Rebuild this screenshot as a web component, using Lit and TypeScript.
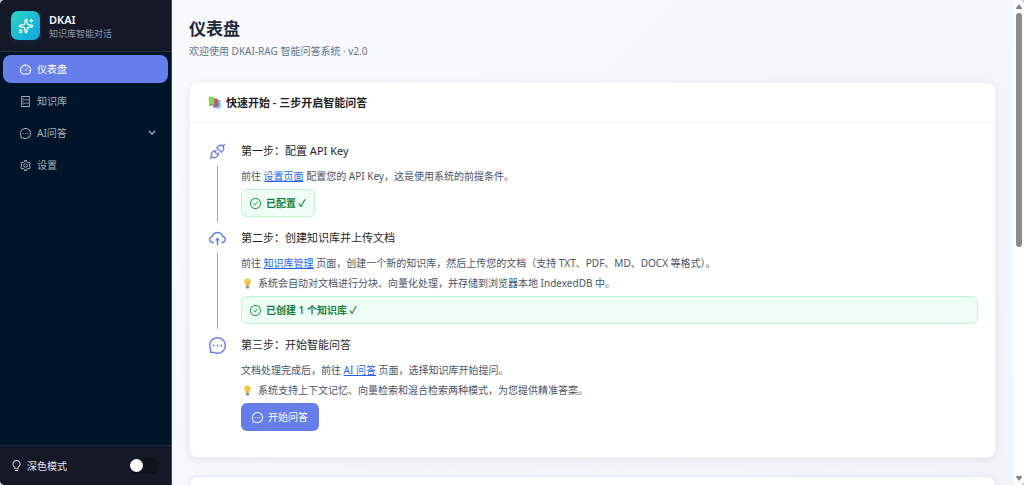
import { LitElement, html, css, svg, nothing } from "lit";
import { customElement, property, state } from "lit/decorators.js";
import { classMap } from "lit/directives/class-map.js";

const PATHS: Record<string, string> = {
  dashboard:
    "M924.8 385.6a446.7 446.7 0 00-96-142.4 446.7 446.7 0 00-142.4-96C631.1 123.8 572.5 112 512 112s-119.1 11.8-174.4 35.2a446.7 446.7 0 00-142.4 96 446.7 446.7 0 00-96 142.4C75.8 440.9 64 499.5 64 560c0 132.7 58.3 257.7 159.9 343.1l1.7 1.4c5.8 4.8 13.1 7.5 20.6 7.5h531.7c7.5 0 14.8-2.7 20.6-7.5l1.7-1.4C901.7 817.7 960 692.7 960 560c0-60.5-11.9-119.1-35.2-174.4zM761.4 836H262.6A371.12 371.12 0 01140 560c0-99.4 38.7-192.8 109-263 70.3-70.3 163.7-109 263-109 99.4 0 192.8 38.7 263 109 70.3 70.3 109 163.7 109 263 0 105.6-44.5 205.5-122.6 276zM623.5 421.5a8.03 8.03 0 00-11.3 0L527.7 506c-18.7-5-39.4-.2-54.1 14.5a55.95 55.95 0 000 79.2 55.95 55.95 0 0079.2 0 55.87 55.87 0 0014.5-54.1l84.5-84.5c3.1-3.1 3.1-8.2 0-11.3l-28.3-28.3zM490 320h44c4.4 0 8-3.6 8-8v-80c0-4.4-3.6-8-8-8h-44c-4.4 0-8 3.6-8 8v80c0 4.4 3.6 8 8 8zm260 218v44c0 4.4 3.6 8 8 8h80c4.4 0 8-3.6 8-8v-44c0-4.4-3.6-8-8-8h-80c-4.4 0-8 3.6-8 8zm12.7-197.2l-31.1-31.1a8.03 8.03 0 00-11.3 0l-56.6 56.6a8.03 8.03 0 000 11.3l31.1 31.1c3.1 3.1 8.2 3.1 11.3 0l56.6-56.6c3.1-3.1 3.1-8.2 0-11.3zm-458.6-31.1a8.03 8.03 0 00-11.3 0l-31.1 31.1a8.03 8.03 0 000 11.3l56.6 56.6c3.1 3.1 8.2 3.1 11.3 0l31.1-31.1c3.1-3.1 3.1-8.2 0-11.3l-56.6-56.6zM262 530h-80c-4.4 0-8 3.6-8 8v44c0 4.4 3.6 8 8 8h80c4.4 0 8-3.6 8-8v-44c0-4.4-3.6-8-8-8z",
  database:
    "M832 64H192c-17.7 0-32 14.3-32 32v832c0 17.7 14.3 32 32 32h640c17.7 0 32-14.3 32-32V96c0-17.7-14.3-32-32-32zm-600 72h560v208H232V136zm560 480H232V408h560v208zm0 272H232V680h560v208zM304 240a40 40 0 1080 0 40 40 0 10-80 0zm0 272a40 40 0 1080 0 40 40 0 10-80 0zm0 272a40 40 0 1080 0 40 40 0 10-80 0z",
  message:
    "M464 512a48 48 0 1096 0 48 48 0 10-96 0zm200 0a48 48 0 1096 0 48 48 0 10-96 0zm-400 0a48 48 0 1096 0 48 48 0 10-96 0zm661.2-173.6c-22.6-53.7-55-101.9-96.3-143.3a444.35 444.35 0 00-143.3-96.3C630.6 75.7 572.2 64 512 64h-2c-60.6.3-119.3 12.3-174.5 35.9a445.35 445.35 0 00-142 96.5c-40.9 41.3-73 89.3-95.2 142.8-23 55.4-34.6 114.3-34.3 174.9A449.4 449.4 0 00112 714v152a46 46 0 0046 46h152.1A449.4 449.4 0 00510 960h2.1c59.9 0 118-11.6 172.7-34.3a444.48 444.48 0 00142.8-95.2c41.3-40.9 73.8-88.7 96.5-142 23.6-55.2 35.6-113.9 35.9-174.5.3-60.9-11.5-120-34.8-175.6zm-151.1 438C704 845.8 611 884 512 884h-1.7c-60.3-.3-120.2-15.3-173.1-43.5l-8.4-4.5H188V695.2l-4.5-8.4C155.3 633.9 140.3 574 140 513.7c-.4-99.7 37.7-193.3 107.6-263.8 69.8-70.5 163.1-109.5 262.8-109.9h1.7c50 0 98.5 9.7 144.2 28.9 44.6 18.7 84.6 45.6 119 80 34.3 34.3 61.3 74.4 80 119 19.4 46.2 29.1 95.2 28.9 145.8-.6 99.6-39.7 192.9-110.1 262.7z",
  setting:
    "M924.8 625.7l-65.5-56c3.1-19 4.7-38.4 4.7-57.8s-1.6-38.8-4.7-57.8l65.5-56a32.03 32.03 0 009.3-35.2l-.9-2.6a443.74 443.74 0 00-79.7-137.9l-1.8-2.1a32.12 32.12 0 00-35.1-9.5l-81.3 28.9c-30-24.6-63.5-44-99.7-57.6l-15.7-85a32.05 32.05 0 00-25.8-25.7l-2.7-.5c-52.1-9.4-106.9-9.4-159 0l-2.7.5a32.05 32.05 0 00-25.8 25.7l-15.8 85.4a351.86 351.86 0 00-99 57.4l-81.9-29.1a32 32 0 00-35.1 9.5l-1.8 2.1a446.02 446.02 0 00-79.7 137.9l-.9 2.6c-4.5 12.5-.8 26.5 9.3 35.2l66.3 56.6c-3.1 18.8-4.6 38-4.6 57.1 0 19.2 1.5 38.4 4.6 57.1L99 625.5a32.03 32.03 0 00-9.3 35.2l.9 2.6c18.1 50.4 44.9 96.9 79.7 137.9l1.8 2.1a32.12 32.12 0 0035.1 9.5l81.9-29.1c29.8 24.5 63.1 43.9 99 57.4l15.8 85.4a32.05 32.05 0 0025.8 25.7l2.7.5a449.4 449.4 0 00159 0l2.7-.5a32.05 32.05 0 0025.8-25.7l15.7-85a350 350 0 0099.7-57.6l81.3 28.9a32 32 0 0035.1-9.5l1.8-2.1c34.8-41.1 61.6-87.5 79.7-137.9l.9-2.6c4.5-12.3.8-26.3-9.3-35zM788.3 465.9c2.5 15.1 3.8 30.6 3.8 46.1s-1.3 31-3.8 46.1l-6.6 40.1 74.7 63.9a370.03 370.03 0 01-42.6 73.6L721 702.8l-31.4 25.8c-23.9 19.6-50.5 35-79.3 45.8l-38.1 14.3-17.9 97a377.5 377.5 0 01-85 0l-17.9-97.2-37.8-14.5c-28.5-10.8-55-26.2-78.7-45.7l-31.4-25.9-93.4 33.2c-17-22.9-31.2-47.6-42.6-73.6l75.5-64.5-6.5-40c-2.4-14.9-3.7-30.3-3.7-45.5 0-15.3 1.2-30.6 3.7-45.5l6.5-40-75.5-64.5c11.3-26.1 25.6-50.7 42.6-73.6l93.4 33.2 31.4-25.9c23.7-19.5 50.2-34.9 78.7-45.7l37.9-14.3 17.9-97.2c28.1-3.2 56.8-3.2 85 0l17.9 97 38.1 14.3c28.7 10.8 55.4 26.2 79.3 45.8l31.4 25.8 92.8-32.9c17 22.9 31.2 47.6 42.6 73.6L781.8 426l6.5 39.9zM512 326c-97.2 0-176 78.8-176 176s78.8 176 176 176 176-78.8 176-176-78.8-176-176-176zm79.2 255.2A111.6 111.6 0 01512 614c-29.9 0-58-11.7-79.2-32.8A111.6 111.6 0 01400 502c0-29.9 11.7-58 32.8-79.2C454 401.6 482.1 390 512 390c29.9 0 58 11.6 79.2 32.8A111.6 111.6 0 01624 502c0 29.9-11.7 58-32.8 79.2z",
  bulb:
    "M632 888H392c-4.4 0-8 3.6-8 8v32c0 17.7 14.3 32 32 32h192c17.7 0 32-14.3 32-32v-32c0-4.4-3.6-8-8-8zM512 64c-181.1 0-328 146.9-328 328 0 121.4 66 227.4 164 284.1V792c0 17.7 14.3 32 32 32h264c17.7 0 32-14.3 32-32V676.1c98-56.7 164-162.7 164-284.1 0-181.1-146.9-328-328-328zm127.9 549.8L604 634.6V752H420V634.6l-35.9-20.8C305.4 568.3 256 484.5 256 392c0-141.4 114.6-256 256-256s256 114.6 256 256c0 92.5-49.4 176.3-128.1 221.8z",
  api:
    "M917.7 148.8l-42.4-42.4c-1.6-1.6-3.6-2.3-5.7-2.3s-4.1.8-5.7 2.3l-76.1 76.1a199.27 199.27 0 00-112.1-34.3c-51.2 0-102.4 19.5-141.5 58.6L432.3 308.7a8.03 8.03 0 000 11.3L704 591.7c1.6 1.6 3.6 2.3 5.7 2.3 2 0 4.1-.8 5.7-2.3l101.9-101.9c68.9-69 77-175.7 24.3-253.5l76.1-76.1c3.1-3.2 3.1-8.3 0-11.4zM769.1 441.7l-59.4 59.4-186.8-186.8 59.4-59.4c24.9-24.9 58.1-38.7 93.4-38.7 35.3 0 68.4 13.7 93.4 38.7 24.9 24.9 38.7 58.1 38.7 93.4 0 35.3-13.8 68.4-38.7 93.4zm-190.2 105a8.03 8.03 0 00-11.3 0L501 613.3 410.7 523l66.7-66.7c3.1-3.1 3.1-8.2 0-11.3L441 408.6a8.03 8.03 0 00-11.3 0L363 475.3l-43-43a7.85 7.85 0 00-5.7-2.3c-2 0-4.1.8-5.7 2.3L206.8 534.2c-68.9 69-77 175.7-24.3 253.5l-76.1 76.1a8.03 8.03 0 000 11.3l42.4 42.4c1.6 1.6 3.6 2.3 5.7 2.3s4.1-.8 5.7-2.3l76.1-76.1c33.7 22.9 72.9 34.3 112.1 34.3 51.2 0 102.4-19.5 141.5-58.6l101.9-101.9c3.1-3.1 3.1-8.2 0-11.3l-43-43 66.7-66.7c3.1-3.1 3.1-8.2 0-11.3l-36.6-36.2zM441.7 769.1a131.32 131.32 0 01-93.4 38.7c-35.3 0-68.4-13.7-93.4-38.7a131.32 131.32 0 01-38.7-93.4c0-35.3 13.7-68.4 38.7-93.4l59.4-59.4 186.8 186.8-59.4 59.4z",
  upload:
    "M518.3 459a8 8 0 00-12.6 0l-112 141.7a7.98 7.98 0 006.3 12.9h73.9V856c0 4.4 3.6 8 8 8h60c4.4 0 8-3.6 8-8V613.7H624c6.7 0 10.4-7.7 6.3-12.9L518.3 459zM811.4 366.7C765.6 245.9 648.9 160 512.2 160S258.8 245.8 213 366.6C127.3 389.1 64 467.2 64 560c0 110.5 89.5 200 199.9 200H304c4.4 0 8-3.6 8-8v-60c0-4.4-3.6-8-8-8h-40.1c-33.7 0-65.4-13.4-89-37.7-23.5-24.2-36-56.8-34.9-90.6.9-26.4 9.9-51.2 26.2-72.1 16.7-21.3 40.1-36.8 66.1-43.7l37.9-9.9 13.9-36.6c8.6-22.8 20.6-44.1 35.7-63.4a245.6 245.6 0 0152.4-49.9c41.1-28.9 89.5-44.2 140-44.2s98.9 15.3 140 44.2c19.9 14 37.5 30.8 52.4 49.9 15.1 19.3 27.1 40.7 35.7 63.4l13.8 36.5 37.8 10C846.1 454.5 884 503.8 884 560c0 33.1-12.9 64.3-36.3 87.7a123.07 123.07 0 01-87.6 36.3H720c-4.4 0-8 3.6-8 8v60c0 4.4 3.6 8 8 8h40.1C870.5 760 960 670.5 960 560c0-92.7-63.1-170.7-148.6-193.3z",
  check:
    "M699 353h-46.9c-10.2 0-19.9 4.9-25.9 13.3L469 584.3l-71.2-98.8c-6-8.3-15.6-13.3-25.9-13.3H325c-6.5 0-10.3 7.4-6.5 12.7l124.6 172.8a31.8 31.8 0 0051.7 0l210.6-292c3.9-5.3.1-12.7-6.4-12.7zM512 64C264.6 64 64 264.6 64 512s200.6 448 448 448 448-200.6 448-448S759.4 64 512 64zm0 820c-205.4 0-372-166.6-372-372s166.6-372 372-372 372 166.6 372 372-166.6 372-372 372z",
};

@customElement("ui-icon")
class UiIcon extends LitElement {
  @property() name = "";

  static styles = css`
    :host {
      display: inline-flex;
      flex: none;
      width: 11px;
      height: 11px;
    }
    .glyph {
      width: 100%;
      height: 100%;
      fill: currentColor;
    }
  `;

  render() {
    return html`<svg class="glyph" viewBox="64 64 896 896" aria-hidden="true">
      ${svg`<path d=${PATHS[this.name] ?? ""}></path>`}
    </svg>`;
  }
}

const MENU = [
  { icon: "dashboard", label: "仪表盘", expandable: false },
  { icon: "database", label: "知识库", expandable: false },
  { icon: "message", label: "AI问答", expandable: true },
  { icon: "setting", label: "设置", expandable: false },
];

const bulbEmoji = html`<svg class="bulb" viewBox="0 0 20 20" aria-hidden="true">
  <path d="M10 1a6 6 0 0 0-6 6c0 3 2.500 4.500 3 8h6c.5-3.500 3-5 3-8a6 6 0 0 0-6-6z" fill="#fdc849" />
  <path d="M8 8l1.500 2v5M12 8l-1.500 2v5" stroke="#f19b38" stroke-width="1" fill="none" />
  <path d="M7 15h6v2.500l-1.500 1.500h-3L7 17.500z" fill="#8a8590" />
</svg>`;

const booksEmoji = html`<svg class="books" viewBox="0 0 24 24" aria-hidden="true">
  <path d="M13 7l10 1v14l-9 1z" fill="#53b9ee" />
  <path d="M14 20l9-1v3l-9 1z" fill="#9ac7e8" />
  <path d="M9 4l9 1v15l-8 1z" fill="#d9406e" />
  <path d="M9 18l9-1v3l-8 1z" fill="#a85f9a" />
  <path d="M1 1l11 1v15l-10 1z" fill="#8bd453" />
  <path d="M2 15l10-1v3l-10 1z" fill="#77a97a" />
</svg>`;

@customElement("app-root")
class AppRoot extends LitElement {
  @state() private active = "仪表盘";
  @state() private dark = false;

  static styles = css`
    :host {
      display: block;
      font-family: "Noto Sans", "Noto Sans CJK SC", sans-serif;
      font-size: 10px;
      line-height: 20px;
      color: #475569;
    }
    * {
      box-sizing: border-box;
    }
    h1, h2, h3, p, ul, ol {
      margin: 0;
      padding: 0;
      font-weight: 400;
      list-style: none;
    }
    .desk {
      background: #b9d3dc;
    }
    .window {
      display: flex;
      height: 100vh;
      overflow: hidden;
      border-radius: 5px;
      background: #fcfcfc;
    }
    .sidebar {
      display: flex;
      flex-direction: column;
      flex: none;
      width: 172px;
      background: #001529;
      border-right: 1px solid #3b4656;
    }
    .brand {
      display: flex;
      align-items: center;
      gap: 9px;
      height: 52px;
      padding: 0 11px;
      background: #141827;
      border-bottom: 1px solid #2a303e;
    }
    .logo {
      display: flex;
      align-items: center;
      justify-content: center;
      width: 29px;
      height: 29px;
      border-radius: 7px;
      background: linear-gradient(135deg, #2dd4bf, #0ea5e9);
      box-shadow: 0 2px 6px rgba(14, 165, 233, 0.1);
    }
    .logo-mark {
      width: 16px;
      height: 16px;
    }
    .brand-name {
      font-size: 11px;
      line-height: 16px;
      font-weight: 600;
      color: #f8fafc;
    }
    .brand-sub {
      font-size: 9px;
      line-height: 12px;
      color: #8f97a5;
    }
    .menu {
      display: flex;
      flex-direction: column;
      gap: 4px;
      flex: 1;
      padding: 3px;
    }
    .item {
      display: flex;
      align-items: center;
      gap: 6px;
      height: 28px;
      padding: 0 12px 0 17px;
      border-radius: 8px;
      color: #a6adb4;
      text-decoration: none;
    }
    .item.active {
      background: #667eea;
      color: #fff;
    }
    .item-label {
      flex: 1;
    }
    .caret {
      width: 8px;
      height: 8px;
      fill: none;
      stroke: currentColor;
      stroke-width: 1.3;
    }
    .theme {
      display: flex;
      align-items: center;
      gap: 5px;
      height: 40px;
      padding: 0 11px;
      background: #141827;
      border-top: 1px solid #232b3a;
      color: #e5e7eb;
    }
    .theme-label {
      flex: 1;
    }
    .switch {
      appearance: none;
      display: flex;
      align-items: center;
      width: 31px;
      height: 16px;
      margin: 0;
      padding: 0 1px;
      border-radius: 8px;
      background: #0f131c;
    }
    .switch::before {
      content: "";
      width: 13px;
      height: 13px;
      border-radius: 50%;
      background: #fff;
    }
    .switch:checked {
      justify-content: flex-end;
      background: #667eea;
    }
    .content {
      flex: 1;
      min-width: 0;
      overflow: hidden;
      padding: 17px;
      background: linear-gradient(135deg, #f8fafc, #f1f5f9);
    }
    .page-title {
      font-size: 17px;
      line-height: 24px;
      font-weight: 600;
      color: #1e293b;
    }
    .page-sub {
      color: #64748b;
    }
    .card {
      margin-top: 21px;
      border: 1px solid #f1f3f7;
      border-radius: 9px;
      background: #fff;
      box-shadow: 0 2px 8px rgba(15, 23, 42, 0.08);
    }
    .card.next {
      margin-top: 18px;
      height: 120px;
      border-color: #e0ebfb;
    }
    .card-head {
      display: flex;
      align-items: center;
      gap: 5px;
      height: 40px;
      padding: 0 18px;
      border-bottom: 1px solid #f3f3f4;
    }
    .card-title {
      font-size: 11px;
      font-weight: 600;
      color: #1f1f1f;
    }
    .books {
      width: 13px;
      height: 13px;
    }
    .steps {
      padding: 17px 17px 16px 19px;
    }
    .step {
      display: flex;
      gap: 15px;
    }
    .rail {
      display: flex;
      flex-direction: column;
      align-items: center;
      width: 17px;
      color: #667eea;
    }
    .rail-icon {
      width: 17px;
      height: 17px;
      margin: 3px 0 2px;
    }
    .rail-line {
      flex: 1;
      width: 1px;
      margin: 4px 0 5px;
      background: #98a6ee;
    }
    .step-body {
      flex: 1;
      min-width: 0;
      padding-bottom: 10px;
    }
    .step-title {
      margin-bottom: 4px;
      font-size: 11px;
      line-height: 22px;
      color: #1f1f1f;
    }
    .link {
      color: #2563eb;
      text-decoration: underline;
    }
    .hint {
      display: flex;
      align-items: center;
      gap: 4px;
    }
    .bulb {
      width: 13px;
      height: 11px;
    }
    .badge {
      display: flex;
      align-items: center;
      gap: 5px;
      height: 28px;
      margin-top: 3px;
      padding: 0 8px;
      border: 1px solid #bbf7d0;
      border-radius: 6px;
      background: #f0fdf4;
      color: #15803d;
      font-weight: 600;
    }
    .badge.fit {
      width: fit-content;
    }
    .badge-icon {
      color: #16a34a;
    }
    .start {
      display: flex;
      align-items: center;
      gap: 5px;
      height: 28px;
      margin-top: 3px;
      padding: 0 11px;
      border: 0;
      border-radius: 6px;
      background: #667eea;
      color: #fff;
      font: inherit;
    }
    .scrollbar {
      display: flex;
      flex-direction: column;
      align-items: center;
      flex: none;
      width: 11px;
      padding: 4px 0;
      gap: 4px;
      background: #fcfcfc;
    }
    .arrow {
      width: 6px;
      height: 5px;
      fill: #858585;
    }
    .track {
      flex: 1;
      width: 6px;
    }
    .thumb {
      height: 51%;
      border-radius: 3px;
      background: #8b8b8b;
    }
  `;

  private renderItem(item: (typeof MENU)[number]) {
    const active = item.label === this.active;
    return html`<a
      class=${classMap({ item: true, active })}
      href="#"
      aria-current=${active ? "page" : nothing}
      @click=${(e: Event) => {
        e.preventDefault();
        this.active = item.label;
      }}
    >
      <ui-icon name=${item.icon}></ui-icon>
      <span class="item-label">${item.label}</span>
      ${item.expandable
        ? html`<svg class="caret" viewBox="0 0 8 8" aria-hidden="true"><path d="M1 2l3 3 3-3" /></svg>`
        : nothing}
    </a>`;
  }

  render() {
    return html`<div class="desk"><div class="window">
      <aside class="sidebar">
        <header class="brand">
          <span class="logo">
            <svg class="logo-mark" viewBox="0 0 24 24" fill="none" stroke="#fff" stroke-width="2" stroke-linecap="round" stroke-linejoin="round" aria-hidden="true">
              <path d="M11.017 2.814a1 1 0 0 1 1.966 0l1.051 5.558a2 2 0 0 0 1.594 1.594l5.558 1.051a1 1 0 0 1 0 1.966l-5.558 1.051a2 2 0 0 0-1.594 1.594l-1.051 5.558a1 1 0 0 1-1.966 0l-1.051-5.558a2 2 0 0 0-1.594-1.594l-5.558-1.051a1 1 0 0 1 0-1.966l5.558-1.051a2 2 0 0 0 1.594-1.594z" />
              <path d="M20 2v4M22 4h-4" />
              <circle cx="4" cy="20" r="2" />
            </svg>
          </span>
          <div>
            <div class="brand-name">DKAI</div>
            <div class="brand-sub">知识库智能对话</div>
          </div>
        </header>
        <nav class="menu">${MENU.map((item) => this.renderItem(item))}</nav>
        <div class="theme">
          <ui-icon name="bulb"></ui-icon>
          <label class="theme-label" for="dark">深色模式</label>
          <input
            class="switch"
            id="dark"
            type="checkbox"
            role="switch"
            .checked=${this.dark}
            @change=${(e: Event) => (this.dark = (e.target as HTMLInputElement).checked)}
          />
        </div>
      </aside>
      <main class="content">
        <h1 class="page-title">仪表盘</h1>
        <p class="page-sub">欢迎使用 DKAI-RAG 智能问答系统 · v2.0</p>
        <section class="card">
          <header class="card-head">
            ${booksEmoji}
            <h2 class="card-title">快速开始 - 三步开启智能问答</h2>
          </header>
          <ol class="steps">
            <li class="step">
              <div class="rail"><ui-icon class="rail-icon" name="api"></ui-icon><span class="rail-line"></span></div>
              <div class="step-body">
                <h3 class="step-title">第一步：配置 API Key</h3>
                <p>前往 <a class="link" href="#">设置页面</a> 配置您的 API Key，这是使用系统的前提条件。</p>
                <div class="badge fit"><ui-icon class="badge-icon" name="check"></ui-icon>已配置 ✓</div>
              </div>
            </li>
            <li class="step">
              <div class="rail"><ui-icon class="rail-icon" name="upload"></ui-icon><span class="rail-line"></span></div>
              <div class="step-body">
                <h3 class="step-title">第二步：创建知识库并上传文档</h3>
                <p>前往 <a class="link" href="#">知识库管理</a> 页面，创建一个新的知识库，然后上传您的文档（支持 TXT、PDF、MD、DOCX 等格式）。</p>
                <p class="hint">${bulbEmoji}系统会自动对文档进行分块、向量化处理，并存储到浏览器本地 IndexedDB 中。</p>
                <div class="badge"><ui-icon class="badge-icon" name="check"></ui-icon>已创建 1 个知识库 ✓</div>
              </div>
            </li>
            <li class="step">
              <div class="rail"><ui-icon class="rail-icon" name="message"></ui-icon></div>
              <div class="step-body">
                <h3 class="step-title">第三步：开始智能问答</h3>
                <p>文档处理完成后，前往 <a class="link" href="#">AI 问答</a> 页面，选择知识库开始提问。</p>
                <p class="hint">${bulbEmoji}系统支持上下文记忆、向量检索和混合检索两种模式，为您提供精准答案。</p>
                <button class="start" type="button"><ui-icon name="message"></ui-icon>开始问答</button>
              </div>
            </li>
          </ol>
        </section>
        <section class="card next"></section>
      </main>
      <div class="scrollbar" aria-hidden="true">
        <svg class="arrow" viewBox="0 0 6 5"><path d="M3 0l3 4v1H0V4z" /></svg>
        <div class="track"><div class="thumb"></div></div>
        <svg class="arrow" viewBox="0 0 6 5"><path d="M3 5l3-4V0H0v1z" /></svg>
      </div>
    </div></div>`;
  }
}
